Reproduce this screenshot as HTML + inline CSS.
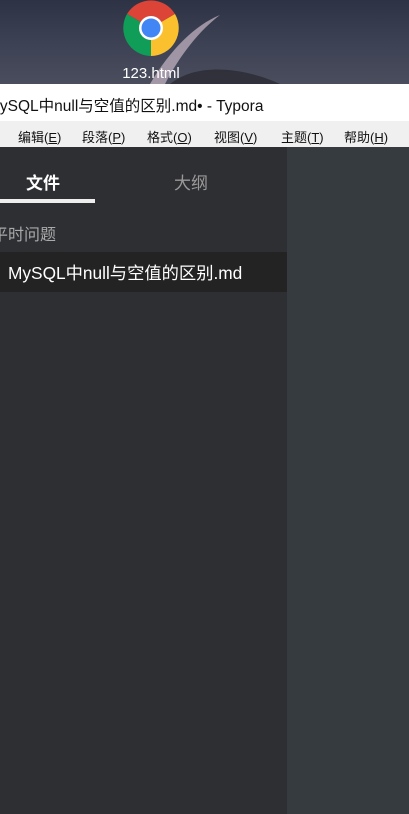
<!DOCTYPE html>
<html><head><meta charset="utf-8"><style>
body{margin:0;width:409px;height:814px;overflow:hidden;position:relative;font-family:"Liberation Sans","Noto Sans CJK SC",sans-serif;background:#2e3034}
div{position:absolute}
</style></head><body>
<div style="left:0;top:0;width:409px;height:84px;background:linear-gradient(180deg,#2d3244 0%,#3c4154 50%,#4a4d5c 100%)"></div>
<svg style="position:absolute;left:0;top:0" width="409" height="84">
<path d="M150 84 C170 50 195 25 220 15 C200 30 180 55 165 84Z" fill="#c9b8c6" opacity="0.7"/>
<path d="M170 84 C200 60 250 70 280 84Z" fill="#2a2a33" opacity="0.8"/>
<g transform="translate(151,28)">
<path d="M0 0 L-24 -14 A28 28 0 0 1 24 -14 Z" fill="#db4437"/>
<path d="M0 0 L24 -14 A28 28 0 0 1 0 28 Z" fill="#fbc02d"/>
<path d="M0 0 L0 28 A28 28 0 0 1 -24 -14 Z" fill="#0f9d58"/>
<circle r="12" fill="#fff"/><circle r="9.5" fill="#4285f4"/>
</g>
<text x="151" y="78" fill="#fff" font-size="15" text-anchor="middle" font-family="Liberation Sans">123.html</text>
</svg>
<div style="left:0;top:84px;width:409px;height:37px;background:#fff"></div>
<div style="left:-13px;top:94px;font-size:15.5px;color:#111;white-space:nowrap">MySQL中null与空值的区别.md• - Typora</div>
<div style="left:0;top:121px;width:409px;height:26px;background:#f0f0f0"></div>
<div style="left:0;top:127px;font-size:13px;color:#111;white-space:nowrap;word-spacing:0">
<span style="position:absolute;left:-6px">)</span>
<span style="position:absolute;left:18px">编辑(<u>E</u>)</span>
<span style="position:absolute;left:82px">段落(<u>P</u>)</span>
<span style="position:absolute;left:147px">格式(<u>O</u>)</span>
<span style="position:absolute;left:214px">视图(<u>V</u>)</span>
<span style="position:absolute;left:281px">主题(<u>T</u>)</span>
<span style="position:absolute;left:344px">帮助(<u>H</u>)</span>
</div>
<div style="left:0;top:147px;width:287px;height:667px;background:#2e2f33"></div>
<div style="left:287px;top:147px;width:122px;height:667px;background:#363b40"></div>
<div style="left:26px;top:169px;font-size:17px;font-weight:bold;color:#fff">文件</div>
<div style="left:174px;top:169px;font-size:17px;color:#999">大纲</div>
<div style="left:0;top:199px;width:95px;height:4px;background:#eee"></div>
<div style="left:-8px;top:221px;font-size:16px;color:#aaa">平时问题</div>
<div style="left:0;top:252px;width:287px;height:40px;background:#232324"></div>
<div style="left:-4px;top:259px;font-size:6px;color:#fff">▯</div>
<div style="left:8px;top:259px;font-size:17.3px;color:#fff;white-space:nowrap">MySQL中null与空值的区别.md</div>
</body></html>
